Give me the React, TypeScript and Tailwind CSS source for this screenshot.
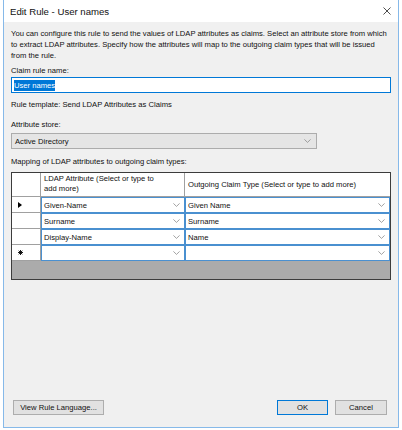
import React from 'react'

function Chevron() {
  return (
    <svg width="7" height="4" viewBox="0 0 7 4" className="shrink-0">
      <path d="M0.4 0.4 L3.5 3.4 L6.6 0.4" fill="none" stroke="#8a8a8a" strokeWidth="0.8" />
    </svg>
  )
}

type Row = { marker: 'current' | 'new' | null; attr: string; claim: string }

const rows: Row[] = [
  { marker: 'current', attr: 'Given-Name', claim: 'Given Name' },
  { marker: null, attr: 'Surname', claim: 'Surname' },
  { marker: null, attr: 'Display-Name', claim: 'Name' },
  { marker: 'new', attr: '', claim: '' },
]

function ComboCell({ value, className }: { value: string; className: string }) {
  return (
    <div className={`flex h-[16px] items-center justify-between border border-[#4a90d0] bg-white pl-[2px] pr-[4px] ${className}`}>
      <span>{value}</span>
      <Chevron />
    </div>
  )
}

function Button({ label, primary, className }: { label: string; primary?: boolean; className?: string }) {
  return (
    <div
      className={`flex h-[15px] items-center justify-center bg-[#e1e1e1] ${
        primary ? 'border border-[#0078d7]' : 'border border-[#adadad]'
      } ${className ?? ''}`}
    >
      {label}
    </div>
  )
}

export default function App() {
  return (
    <div className="h-[430px] w-[402px] bg-white font-['Liberation_Sans',Arial,sans-serif] text-[7.65px] leading-[11px] text-[#111]">
      <div className="ml-[3px] flex h-[428px] w-[396px] flex-col border-x border-b border-[#86b9e9]">
        {/* title bar */}
        <div className="flex h-[22px] shrink-0 items-center justify-between bg-white pl-[6px] pr-[7px]">
          <span className="text-[9.6px]">Edit Rule - User names</span>
          <svg width="8" height="8" viewBox="0 0 8 8">
            <path d="M0.5 0.5 L7.5 7.5 M7.5 0.5 L0.5 7.5" stroke="#222" strokeWidth="0.8" />
          </svg>
        </div>

        {/* body */}
        <div className="flex flex-1 flex-col bg-[#f0f0f0] px-[7px] pt-[6px] pb-[12px]">
          <p className="whitespace-nowrap">
            You can configure this rule to send the values of LDAP attributes as claims. Select an attribute store from which
            <br />
            to extract LDAP attributes. Specify how the attributes will map to the outgoing claim types that will be issued
            <br />
            from the rule.
          </p>

          <div className="mt-[4px]">Claim rule name:</div>
          <div className="mt-[1px] flex h-[16px] items-center border border-[#0078d7] bg-white px-[2px]">
            <span className="bg-[#0078d7] leading-[11px] text-white">User names</span>
          </div>

          <div className="mt-[6px]">Rule template: Send LDAP Attributes as Claims</div>

          <div className="mt-[9px]">Attribute store:</div>
          <div className="mt-[3px] flex h-[16px] w-[306px] items-center justify-between border border-[#acacac] bg-[#e5e5e5] pl-[3px] pr-[5px]">
            <span>Active Directory</span>
            <Chevron />
          </div>

          <div className="mt-[7px]">Mapping of LDAP attributes to outgoing claim types:</div>

          {/* grid */}
          <div className="mt-[5px] flex h-[108px] flex-col border border-[#3c3c3c] bg-[#ababab]">
            <div className="flex h-[24px] shrink-0 bg-white">
              <div className="w-[29px] border-r border-b border-[#a0a0a0]" />
              <div className="w-[144px] border-r border-b border-[#a0a0a0] pt-[1px] pl-[3px] leading-[10px]">
                LDAP Attribute (Select or type to
                <br />
                add more)
              </div>
              <div className="flex flex-1 items-center border-b border-[#a0a0a0] pl-[3px]">
                Outgoing Claim Type (Select or type to add more)
              </div>
            </div>
            {rows.map((r, i) => (
              <div key={i} className="flex h-[16px] shrink-0">
                <div className="flex w-[29px] items-center border-r border-b border-[#a0a0a0] bg-white pl-[6px]">
                  {r.marker === 'current' && (
                    <svg width="4" height="6" viewBox="0 0 4 6">
                      <path d="M0 0 L4 3 L0 6 Z" fill="#000" />
                    </svg>
                  )}
                  {r.marker === 'new' && (
                    <svg width="5" height="5" viewBox="0 0 5 5">
                      <path d="M2.5 0 V5 M0 2.5 H5 M0.7 0.7 L4.3 4.3 M4.3 0.7 L0.7 4.3" stroke="#000" strokeWidth="0.9" />
                    </svg>
                  )}
                </div>
                <ComboCell value={r.attr} className="w-[144px]" />
                <ComboCell value={r.claim} className="flex-1" />
              </div>
            ))}
          </div>

          <div className="flex-1" />

          <div className="flex items-center">
            <Button label="View Rule Language..." className="ml-[2px] w-[91px]" />
            <div className="flex-1" />
            <Button label="OK" primary className="w-[51px]" />
            <Button label="Cancel" className="ml-[7px] mr-[4px] w-[52px]" />
          </div>
        </div>
      </div>
    </div>
  )
}
